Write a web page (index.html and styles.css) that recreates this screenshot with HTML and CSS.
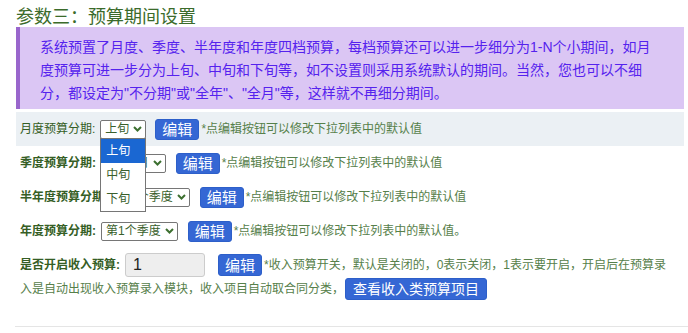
FILE: index.html
```html
<!DOCTYPE html>
<html lang="zh-CN">
  <head>
    <meta charset="UTF-8" />
    <meta name="viewport" content="width=device-width, initial-scale=1.0" />
    <title>预算期间设置</title>
    <link rel="stylesheet" href="styles.css">
  </head>
  <body>
    <h2 class="titulo">参数三：预算期间设置</h2>
    <div class="aviso">系统预置了月度、季度、半年度和年度四档预算，每档预算还可以进一步细分为1-N个小期间，如月度预算可进一步分为上旬、中旬和下旬等，如不设置则采用系统默认的期间。当然，您也可以不细分，都设定为"不分期"或"全年"、"全月"等，这样就不再细分期间。</div>
    <div class="form">
      <div class="linha linha-destaque">
        <span class="rotulo rotulo-normal">月度预算分期:</span>
        <div class="select aberto">
          <span>上旬</span>
          <svg class="seta" width="9" height="6" viewBox="0 0 9 6"><path d="M1 1 L4.5 4.5 L8 1" /></svg>
          <ul class="opcoes">
            <li class="ativo">上旬</li>
            <li>中旬</li>
            <li>下旬</li>
          </ul>
        </div>
        <button class="btn">编辑</button>
        <span class="dica">*点编辑按钮可以修改下拉列表中的默认值</span>
      </div>
      <div class="linha">
        <span class="rotulo">季度预算分期:</span>
        <div class="select">
          <span>第1个月</span>
          <svg class="seta" width="9" height="6" viewBox="0 0 9 6"><path d="M1 1 L4.5 4.5 L8 1" /></svg>
        </div>
        <button class="btn">编辑</button>
        <span class="dica">*点编辑按钮可以修改下拉列表中的默认值</span>
      </div>
      <div class="linha">
        <span class="rotulo">半年度预算分期:</span>
        <div class="select">
          <span>第1个季度</span>
          <svg class="seta" width="9" height="6" viewBox="0 0 9 6"><path d="M1 1 L4.5 4.5 L8 1" /></svg>
        </div>
        <button class="btn">编辑</button>
        <span class="dica">*点编辑按钮可以修改下拉列表中的默认值</span>
      </div>
      <div class="linha">
        <span class="rotulo">年度预算分期:</span>
        <div class="select">
          <span>第1个季度</span>
          <svg class="seta" width="9" height="6" viewBox="0 0 9 6"><path d="M1 1 L4.5 4.5 L8 1" /></svg>
        </div>
        <button class="btn">编辑</button>
        <span class="dica">*点编辑按钮可以修改下拉列表中的默认值。</span>
      </div>
      <div class="linha-texto">
        <span class="rotulo">是否开启收入预算:</span><input class="campo" type="text" value="1"><button class="btn btn-campo">编辑</button><span class="dica">*收入预算开关，默认是关闭的，0表示关闭，1表示要开启，开启后在预算录入是自动出现收入预算录入模块，收入项目自动取合同分类，</span><button class="btn btn-grande">查看收入类预算项目</button>
      </div>
    </div>
    <hr class="divisoria">
  </body>
</html>
```

FILE: styles.css
```css
body {
  margin: 0;
  font-family: "Liberation Sans", "Noto Sans CJK SC", sans-serif;
  color: #3b6b2b;
  background: white;
}
.titulo {
  margin: 0 0 0 16px;
  padding-top: 7px;
  font-size: 18px;
  font-weight: normal;
  line-height: 20px;
  color: #3b6b2b;
}
.aviso {
  margin: 0 4px 0 16px;
  padding: 9px 20px 4px 20px;
  border-left: 4px solid #9966cc;
  background: #dbc6f4;
  color: #5522ee;
  font-size: 14px;
  line-height: 23px;
}
.form {
  margin: 3px 4px 0 16px;
  font-size: 12px;
}
.linha {
  display: flex;
  align-items: center;
  height: 34px;
  padding-left: 4px;
  line-height: 20px;
}
.linha-destaque {
  background: #ebf0f4;
}
.rotulo {
  font-weight: bold;
  color: #355e25;
  margin-right: 5px;
}
.rotulo-normal {
  font-weight: normal;
}
.select {
  position: relative;
  display: flex;
  align-items: center;
  gap: 4px;
  box-sizing: border-box;
  height: 19px;
  padding: 0 3px 0 4px;
  border: 1px solid #767676;
  border-radius: 2px;
  background: white;
  color: #3a5f2c;
}
.seta path {
  fill: none;
  stroke: #3d7030;
  stroke-width: 2;
}
.opcoes {
  position: absolute;
  top: 100%;
  left: -1px;
  right: -1px;
  z-index: 2;
  margin: 0;
  padding: 0;
  list-style: none;
  border: 1px solid #767676;
  background: white;
}
.opcoes li {
  height: 24px;
  line-height: 24px;
  padding-left: 5px;
  color: #3a5f2c;
}
.opcoes li.ativo {
  background: #1a67d2;
  color: white;
}
.btn {
  box-sizing: border-box;
  height: 21px;
  margin-left: 10px;
  padding: 0 6px;
  border: 1px solid #2d5fc9;
  border-radius: 3px;
  background: #3567d4;
  color: white;
  font-family: "Liberation Sans", "Noto Sans CJK SC", sans-serif;
  font-size: 15px;
  line-height: 19px;
}
.linha-destaque .btn {
  margin-left: 9px;
}
.dica {
  margin-left: 2px;
  color: #56804a;
}
.linha-texto {
  padding: 5px 8px 0 4px;
  line-height: 24px;
}
.campo {
  box-sizing: border-box;
  width: 80px;
  height: 24px;
  padding: 0 7px;
  vertical-align: top;
  border: 1px solid #cccccc;
  border-radius: 3px;
  background: #eeeeee;
  color: #222;
  font-family: "Liberation Sans", sans-serif;
  font-size: 16px;
}
.btn-campo {
  margin: 1px 0 0 13px;
  height: 22px;
  vertical-align: top;
}
.btn-grande {
  margin: 1px 0 0 1px;
  height: 22px;
  padding: 0 7px;
  vertical-align: top;
  font-size: 14px;
}
.divisoria {
  margin: 25px 0 0 15px;
  border: 0;
  border-top: 1px solid #e5e5e5;
}
```
